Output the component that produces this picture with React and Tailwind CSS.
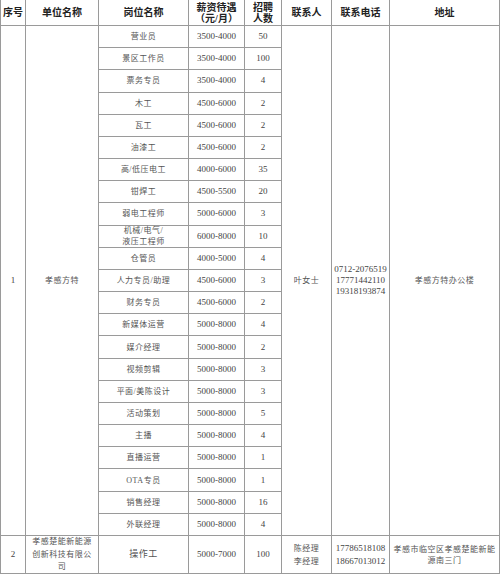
import React from "react";

// 招聘岗位表
const jobs = [
  ["营业员", "3500-4000", "50"],
  ["景区工作员", "3500-4000", "100"],
  ["票务专员", "3500-4000", "4"],
  ["木工", "4500-6000", "2"],
  ["瓦工", "4500-6000", "2"],
  ["油漆工", "4500-6000", "2"],
  ["高/低压电工", "4000-6000", "35"],
  ["钳焊工", "4500-5500", "20"],
  ["弱电工程师", "5000-6000", "3"],
  ["机械/电气/\n液压工程师", "6000-8000", "10"],
  ["仓管员", "4000-5000", "4"],
  ["人力专员/助理", "4500-6000", "3"],
  ["财务专员", "4500-6000", "2"],
  ["新媒体运营", "5000-8000", "4"],
  ["媒介经理", "5000-8000", "2"],
  ["视频剪辑", "5000-8000", "3"],
  ["平面/美陈设计", "5000-8000", "3"],
  ["活动策划", "5000-8000", "5"],
  ["主播", "5000-8000", "4"],
  ["直播运营", "5000-8000", "1"],
  ["OTA专员", "5000-8000", "1"],
  ["销售经理", "5000-8000", "16"],
  ["外联经理", "5000-8000", "4"],
];

const serif = { fontFamily: '"Liberation Serif", "Noto Sans CJK SC", serif' };

function Cell({ children, className = "" }) {
  return (
    <div className={`bg-white flex items-center justify-center text-center ${className}`}>
      {children}
    </div>
  );
}

function Head({ children }) {
  return (
    <Cell className="text-[10px] leading-[11px] font-bold text-[#222] whitespace-pre-line overflow-hidden">
      {children}
    </Cell>
  );
}

function Txt({ children, className = "" }) {
  return (
    <Cell className={`text-[8px] tracking-[0.5px] leading-[11px] text-[#555] whitespace-pre-line ${className}`}>
      {children}
    </Cell>
  );
}

function Num({ children, className = "" }) {
  return (
    <Cell className={`text-[9px] leading-[11px] text-[#444] whitespace-pre-line ${className}`}>
      {children}
    </Cell>
  );
}

export default function App() {
  const [first, ...rest] = jobs;

  return (
    <div className="w-[500px] h-[574px] bg-white overflow-hidden" style={serif}>
      <div className="grid h-[574px] gap-px bg-[#9a9a9a] pl-px pr-px pb-px grid-cols-[24px_72px_89px_55px_36px_49px_57px_109px] grid-rows-[25px_repeat(23,minmax(0,1fr))_37px]">
        <Head>序号</Head>
        <Head>单位名称</Head>
        <Head>岗位名称</Head>
        <Head>{"薪资待遇\n（元/月）"}</Head>
        <Head>{"招聘\n人数"}</Head>
        <Head>联系人</Head>
        <Head>联系电话</Head>
        <Head>地址</Head>

        <Num className="row-span-23">1</Num>
        <Txt className="row-span-23 text-[8.5px]">孝感方特</Txt>
        <Txt>{first[0]}</Txt>
        <Num>{first[1]}</Num>
        <Num>{first[2]}</Num>
        <Txt className="row-span-23">叶女士</Txt>
        <Num className="row-span-23">{"0712-2076519\n17771442110\n19318193874"}</Num>
        <Txt className="row-span-23">孝感方特办公楼</Txt>

        {rest.map(([name, pay, count]) => (
          <React.Fragment key={name}>
            <Txt>{name}</Txt>
            <Num>{pay}</Num>
            <Num>{count}</Num>
          </React.Fragment>
        ))}

        <Num>2</Num>
        <Txt className="items-start leading-[12.5px] whitespace-nowrap">
          {"孝感楚能新能源\n创新科技有限公\n司"}
        </Txt>
        <Txt className="text-[9px]">操作工</Txt>
        <Num>5000-7000</Num>
        <Num>100</Num>
        <Txt className="leading-[13px]">{"陈经理\n李经理"}</Txt>
        <Num className="leading-[13px]">{"17786518108\n18667013012"}</Num>
        <Txt className="leading-[11px] whitespace-nowrap">{"孝感市临空区孝感楚能新能\n源南三门"}</Txt>
      </div>
    </div>
  );
}
